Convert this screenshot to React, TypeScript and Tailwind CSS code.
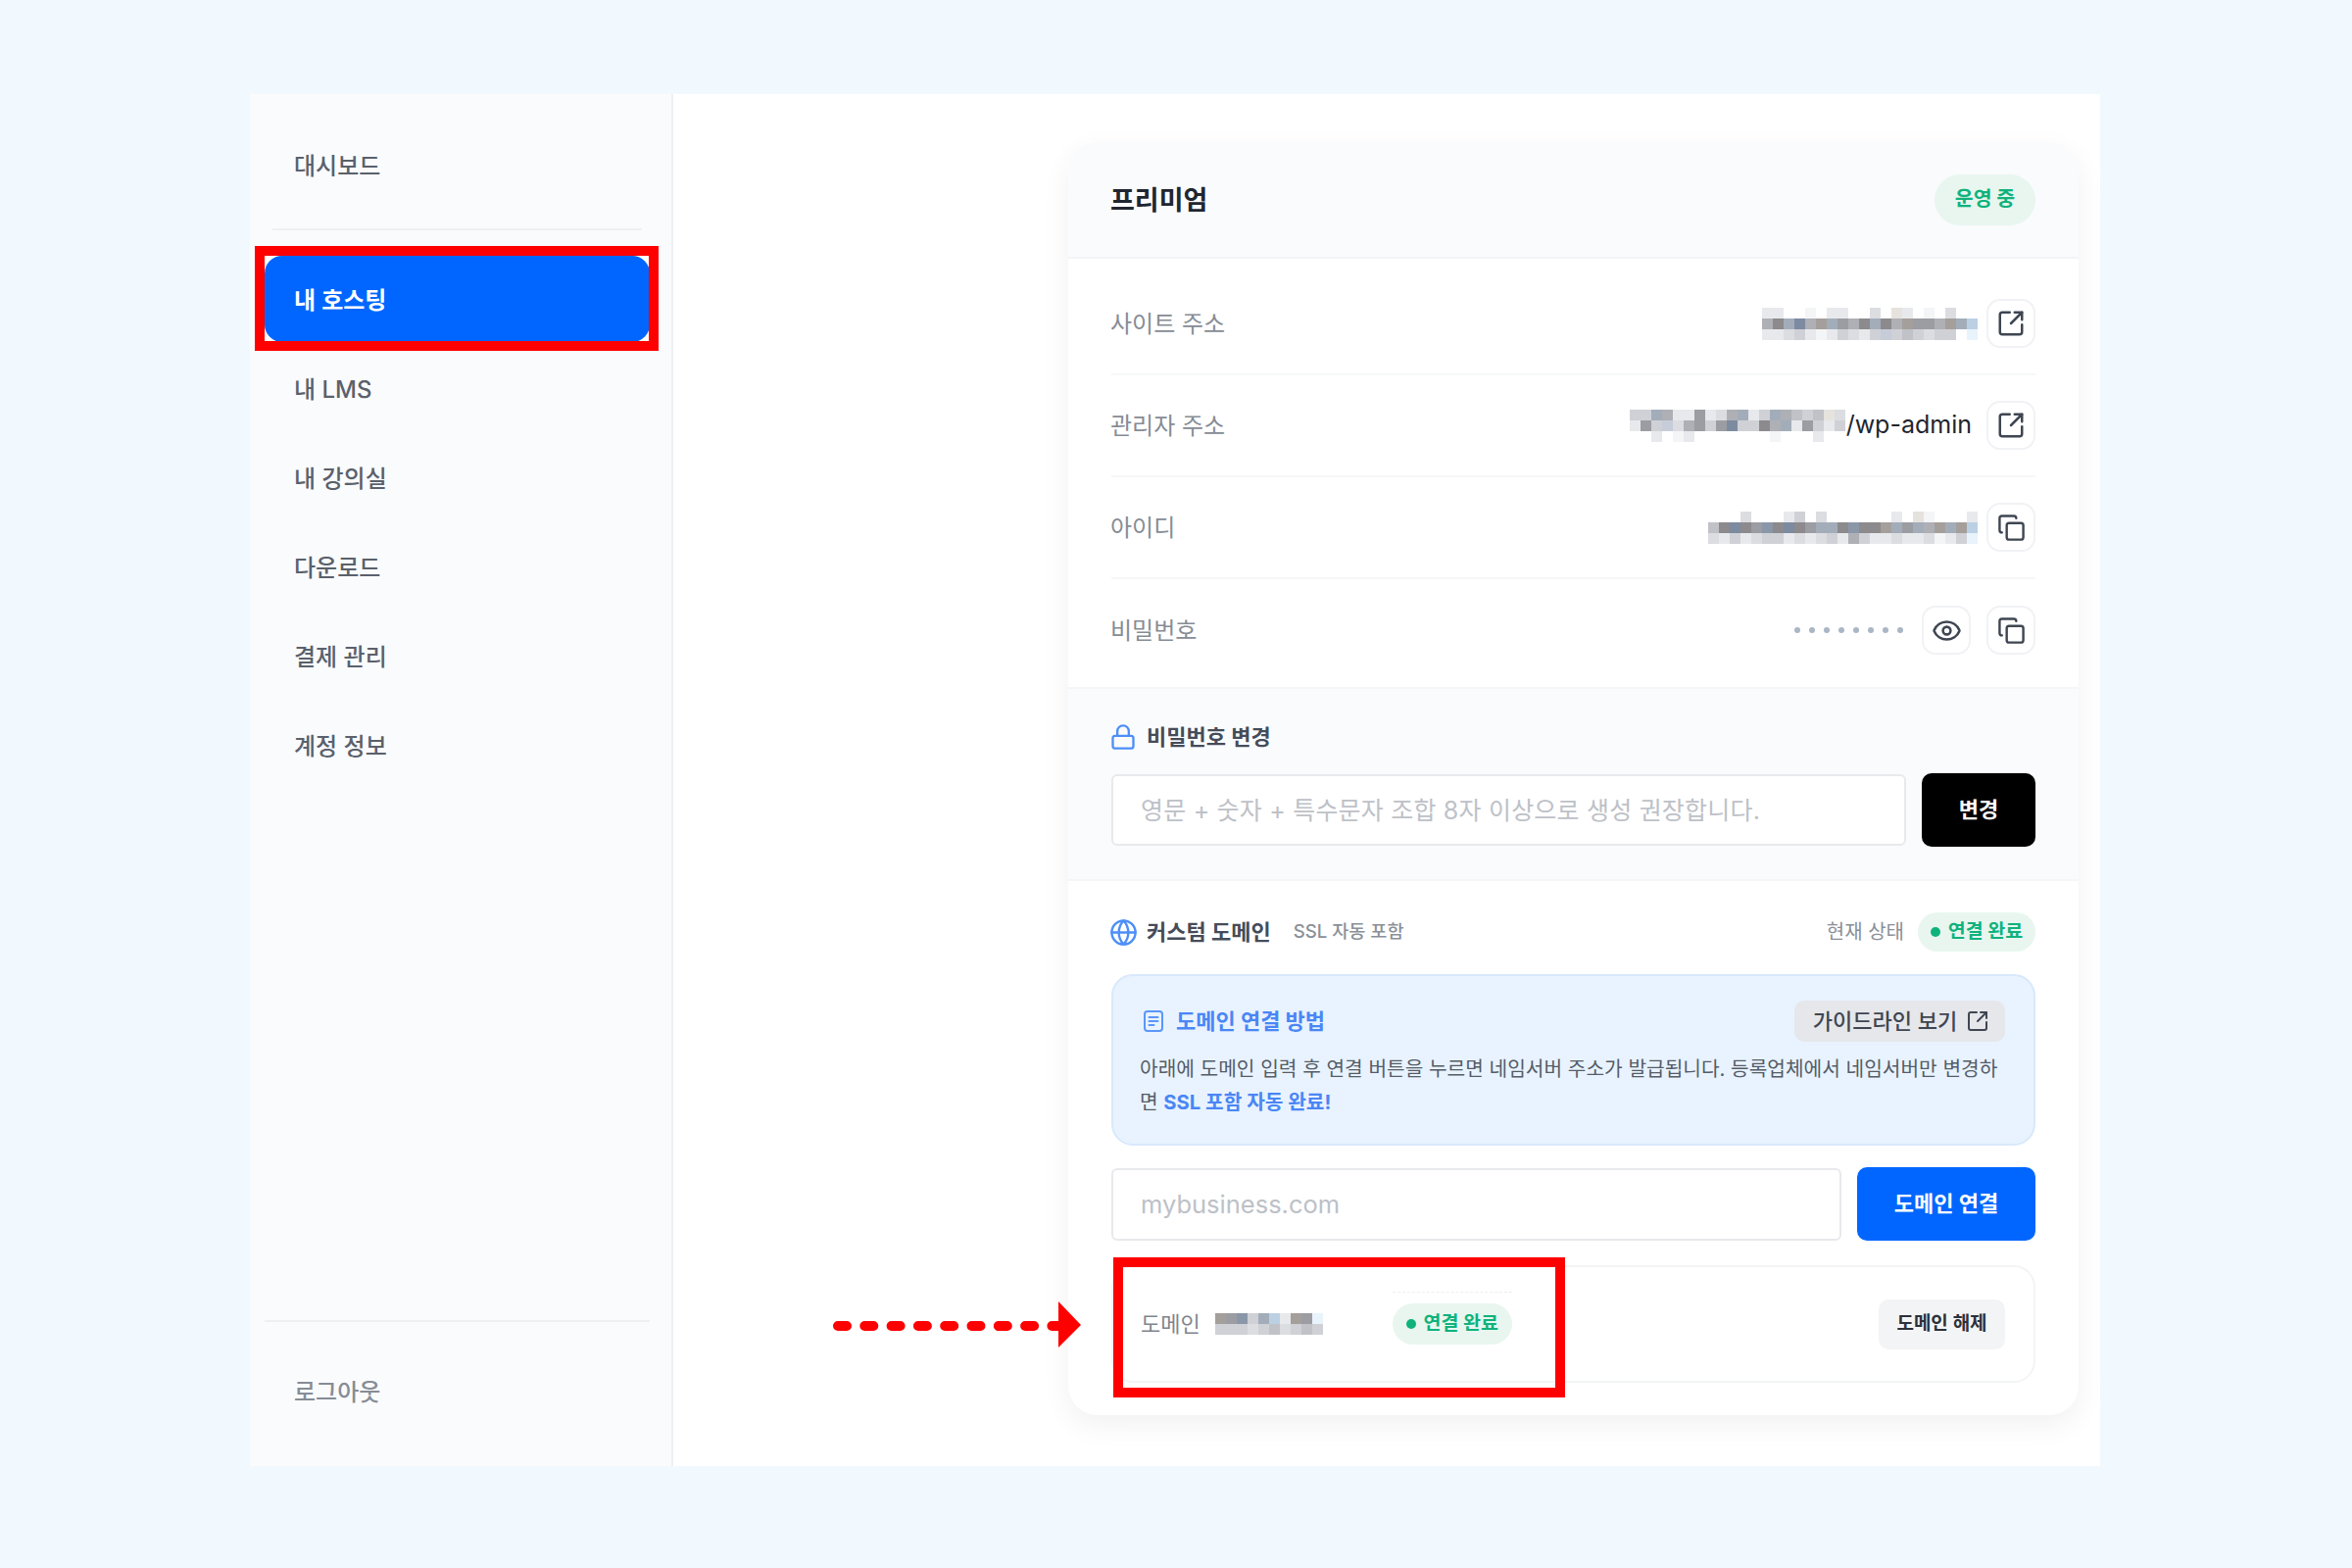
import React from "react";
import { SquareArrowOutUpRight, Copy, Eye, Lock, Globe } from "lucide-react";

const P: Record<string, string> = {
  a: "#f4f5f7", b: "#e8e9ec", c: "#dcdde1", d: "#cfd1d6", e: "#c0c2c7", f: "#aeb0b6",
  g: "#9b9da3", h: "#8c8a8c", i: "#8a97a8", j: "#a3adba", k: "#bcd0e4", l: "#e9f3fb", m: "#a59f9c", n: "#7d8ba0", o: "#e6e3df", p: "#c6ccd8",
};

function Mosaic({ rows, cell = 11 }: { rows: string[]; cell?: number }) {
  const w = rows[0].length * cell;
  const h = rows.length * cell;
  return (
    <svg width={w} height={h} className="shrink-0 block" shapeRendering="crispEdges">
      {rows.flatMap((r, y) =>
        r.split("").map((c, x) =>
          c === "." ? null : <rect key={`${x}-${y}`} x={x * cell} y={y * cell} width={cell} height={cell} fill={P[c]} />
        )
      )}
    </svg>
  );
}

function IconButton({ children }: { children: React.ReactNode }) {
  return (
    <div className="w-[50px] h-[50px] shrink-0 rounded-[14px] border-2 border-[#f1f2f5] bg-white flex items-center justify-center text-[#3f4652]">
      {children}
    </div>
  );
}

function Row({ label, last, children }: { label: string; last?: boolean; children: React.ReactNode }) {
  return (
    <div className={`h-[104px] flex items-center justify-between ${last ? "" : "border-b-2 border-[#f5f7f8]"}`}>
      <span className="text-[24px] text-[#868c95] -ml-[1px] pt-[2px]">{label}</span>
      <div className="flex items-center">{children}</div>
    </div>
  );
}

function NavItem({ children, active, list }: { children: React.ReactNode; active?: boolean; list?: boolean }) {
  return (
    <div
      className={`h-[88px] flex items-center pl-[30px] rounded-[18px] text-[24px] ${list ? "pt-[3px]" : ""} ${
        active ? "bg-[#0066ff] text-white font-semibold" : "text-[#5a616c] font-medium"
      }`}
    >
      {children}
    </div>
  );
}

function Badge({ dot, children, className }: { dot?: boolean; children: React.ReactNode; className: string }) {
  return (
    <div className={`flex items-center justify-center rounded-full bg-[#e8f6ef] text-[#10b27c] font-bold ${className}`}>
      {dot && <span className="w-[10px] h-[10px] rounded-full bg-[#10b27c] mr-[8px]" />}
      {children}
    </div>
  );
}

export default function App() {
  return (
    <div
      className="relative w-[2400px] h-[1600px] bg-[#f1f9ff] pt-[96px] pl-[255px] overflow-hidden"
      style={{ fontFamily: '"Inter", "Noto Sans CJK KR", sans-serif' }}
    >
      <div className="w-[1888px] h-[1400px] flex bg-white">
        {/* Sidebar */}
        <aside className="w-[432px] shrink-0 bg-[#fafbfd] border-r-2 border-[#eef0f3] flex flex-col pl-[15px] pr-[22px] pt-[30px] pb-[31px]">
          <NavItem>대시보드</NavItem>
          <div className="mx-[8px] mt-[19px] mb-[26px] border-t-2 border-[#eff0f2]" />
          <div className="flex flex-col gap-[3px]">
            <div className="bg-white">
              <NavItem active list>내 호스팅</NavItem>
            </div>
            <NavItem list>내 LMS</NavItem>
            <NavItem list>내 강의실</NavItem>
            <NavItem list>다운로드</NavItem>
            <NavItem list>결제 관리</NavItem>
            <NavItem list>계정 정보</NavItem>
          </div>
          <div className="mt-auto mb-[28px] border-t-2 border-[#eff0f2]" />
          <NavItem><span className="text-[#868c95]">로그아웃</span></NavItem>
        </aside>

        {/* Main */}
        <main className="flex-1 flex justify-end items-start pr-[22px] pt-[49px]">
          <div className="w-[1031px] bg-white rounded-[30px] overflow-hidden shadow-[0_10px_30px_rgba(0,0,0,0.06)]">
            <div className="h-[119px] bg-[#fafbfd] border-b-2 border-[#f3f4f6] px-[44px] flex items-center justify-between">
              <h1 className="text-[27px] font-bold text-[#1f2630] -ml-[1px] pt-[3px]">프리미엄</h1>
              <Badge className="w-[103px] h-[52px] text-[20.5px]">운영 중</Badge>
            </div>

            <div className="px-[44px] pt-[15px] pb-[6px]">
              <Row label="사이트 주소">
                <Mosaic rows={["bb..a.bb..c.ob.a.c..", "fhjnfmjgfhjhfmggfmjk", "bbcdbabdcbdpdedcdd.l"]} />
                <div className="w-[9px]" />
                <IconButton><SquareArrowOutUpRight size={30} strokeWidth={2} /></IconButton>
              </Row>
              <Row label="관리자 주소">
                <Mosaic rows={["ddjfbbgbcfjbdjfedeoc", "bgdpcfgdgnddhfjbgdbd", "..b.ab.......a...b.."]} />
                <span className="text-[25px] text-[#1f2630] ml-[1px] mr-[15px]">/wp-admin</span>
                <IconButton><SquareArrowOutUpRight size={30} strokeWidth={2} /></IconButton>
              </Row>
              <Row label="아이디">
                <Mosaic rows={["...c...bd.c......b.oa...b", "ehnhgihnhgjjhihhmjgjfmjmk", "cbdbcddbcbcdbfdbbcbbcabdl"]} />
                <div className="w-[9px]" />
                <IconButton><Copy size={29} strokeWidth={2} /></IconButton>
              </Row>
              <Row label="비밀번호" last>
                <div className="flex items-center gap-[9px] mr-[19px]">
                  {Array.from({ length: 8 }).map((_, i) => (
                    <span key={i} className="w-[6px] h-[6px] rounded-full bg-[#a9b6c5]" />
                  ))}
                </div>
                <IconButton><Eye size={31} strokeWidth={2} /></IconButton>
                <div className="w-[16px]" />
                <IconButton><Copy size={29} strokeWidth={2} /></IconButton>
              </Row>
            </div>

            {/* Password */}
            <div className="bg-[#fafbfd] border-t-2 border-[#f5f6f8] px-[44px] pt-[34px] pb-[33px]">
              <div className="h-[30px] flex items-center">
                <Lock size={28} strokeWidth={2} className="text-[#4d8ff8] -ml-[2px]" />
                <span className="ml-[10px] text-[22px] font-bold text-[#454c59]">비밀번호 변경</span>
              </div>
              <div className="mt-[22px] flex items-center gap-[16px]">
                <input
                  readOnly
                  placeholder="영문 + 숫자 + 특수문자 조합 8자 이상으로 생성 권장합니다."
                  className="flex-1 h-[73px] rounded-[6px] border-2 border-[#e8e9ec] bg-white pl-[28px] text-[25px] tracking-[0.2px] placeholder:text-[#bdc1c7] outline-none"
                />
                <button className="w-[116px] h-[75px] rounded-[10px] bg-black text-white text-[22px] font-bold">변경</button>
              </div>
            </div>

            {/* Domain */}
            <div className="border-t-2 border-[#f5f6f8] px-[44px] pt-[32px] pb-[33px]">
              <div className="h-[40px] flex items-center">
                <Globe size={29} strokeWidth={2} className="text-[#4d8ff8] -ml-[2px]" />
                <span className="ml-[9px] text-[22px] font-bold text-[#454c59]">커스텀 도메인</span>
                <span className="ml-[23px] text-[18.6px] font-medium text-[#8a9098]">SSL 자동 포함</span>
                <span className="ml-auto mr-[14px] text-[20px] text-[#8a9098]">현재 상태</span>
                <Badge dot className="w-[120px] h-[40px] text-[19.5px]">연결 완료</Badge>
              </div>

              <div className="mt-[23px] h-[175px] rounded-[22px] bg-[#e8f3ff] border-2 border-[#d9e8fb] pl-[27px] pr-[29px] pt-[25px]">
                <div className="flex items-center justify-between">
                  <div className="flex items-center">
                    <svg width="24" height="24" viewBox="0 0 24 24" fill="none" stroke="currentColor" strokeWidth="2" strokeLinecap="round" className="text-[#5a97f8] ml-[2px]">
                      <rect x="3" y="2" width="18" height="20" rx="3" />
                      <path d="M7.5 8h9M7.5 12h9M7.5 16h5" />
                    </svg>
                    <span className="ml-[11px] text-[22px] font-bold text-[#4a86f5]">도메인 연결 방법</span>
                  </div>
                  <div className="w-[215px] h-[42px] rounded-[10px] bg-[#e5e7eb] flex items-center justify-center gap-[9px] text-[22px] font-medium text-[#3f4652] pl-[3px]">
                    가이드라인 보기
                    <SquareArrowOutUpRight size={24} strokeWidth={2} />
                  </div>
                </div>
                <p className="mt-[11px] text-[20.25px] leading-[34px] text-[#555c67] break-all">
                  아래에 도메인 입력 후 연결 버튼을 누르면 네임서버 주소가 발급됩니다. 등록업체에서 네임서버만 변경하면{" "}
                  <span className="font-bold text-[#4a86f5]">SSL 포함 자동 완료!</span>
                </p>
              </div>

              <div className="mt-[22px] flex items-center gap-[16px]">
                <input
                  readOnly
                  placeholder="mybusiness.com"
                  className="flex-1 h-[74px] rounded-[6px] border-2 border-[#e8e9ec] bg-white pl-[28px] text-[25.5px] placeholder:text-[#bdc1c7] outline-none"
                />
                <button className="w-[182px] h-[75px] rounded-[10px] bg-[#0066ff] text-white text-[22px] font-bold">도메인 연결</button>
              </div>

              <div className="mt-[25px] h-[120px] rounded-[22px] border-2 border-[#f3f4f6] pl-[28px] pr-[29px] flex items-center">
                <span className="text-[22px] text-[#7f858e]">도메인</span>
                <div className="ml-[15px]">
                  <Mosaic rows={["mgidjkbmgl", "dddcdecded"]} />
                </div>
                <div className="relative ml-[71px]">
                  <div className="absolute -top-[12px] left-0 right-0 border-t border-dashed border-[#eceeec]" />
                  <Badge dot className="w-[122px] h-[42px] text-[19.5px]">연결 완료</Badge>
                </div>
                <div className="ml-auto w-[129px] h-[51px] rounded-[10px] bg-[#f3f4f6] flex items-center justify-center text-[19px] font-semibold text-[#2b313b]">
                  도메인 해제
                </div>
              </div>
            </div>
          </div>
        </main>
      </div>

      {/* Annotations */}
      <div className="absolute left-[260px] top-[251px] w-[412px] h-[107px] border-[10px] border-[#ff0000]" />
      <div className="absolute left-[1136px] top-[1283px] w-[461px] h-[143px] border-[10px] border-[#ff0000]" />
      <svg className="absolute left-[845px] top-[1324px]" width="262" height="56" viewBox="0 0 262 56">
        <line x1="10" y1="29" x2="240" y2="29" stroke="#ff0000" strokeWidth="10" strokeLinecap="round" strokeDasharray="9 18.3" />
        <polygon points="235,4 258,28 235,51" fill="#ff0000" />
      </svg>
    </div>
  );
}
